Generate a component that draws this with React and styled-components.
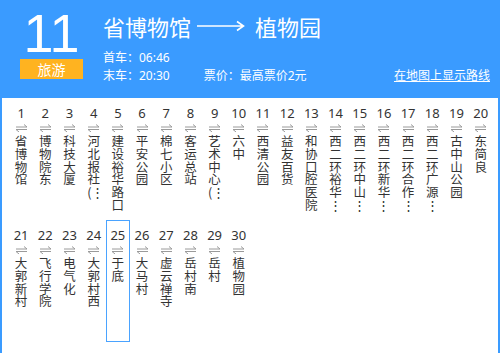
import styled, { createGlobalStyle } from 'styled-components';

const GlobalStyle = createGlobalStyle`
  html, body {
    margin: 0;
    padding: 0;
    background: #fff;
  }
  body {
    font-family: 'Noto Sans', 'Noto Sans CJK SC', sans-serif;
  }
`;

const BLUE = '#3a9bff';

const stops = [
  '省博物馆', '博物院东', '科技大厦', '河北报社(⋮', '建设裕华路口', '平安公园',
  '棉七小区', '客运总站', '艺术中心(⋮', '六中', '西清公园', '益友百货',
  '和协口腔医院', '西二环裕华⋮', '西二环中山⋮', '西二环新华⋮', '西二环合作⋮',
  '西二环广源⋮', '古中山公园', '东简良', '大郭新村', '飞行学院', '电气化',
  '大郭村西', '于底', '大马村', '虚云禅寺', '岳村南', '岳村', '植物园',
];

const Panel = styled.div`
  width: 500px;
  height: 353px;
  overflow: hidden;
  display: flex;
  flex-direction: column;
`;

const Header = styled.div`
  height: 98px;
  flex-shrink: 0;
  background: ${BLUE};
  color: #fff;
  display: flex;
  padding: 0 10px 0 20px;
  box-sizing: border-box;
`;

const Badge = styled.div`
  width: 63px;
  display: flex;
  flex-direction: column;
  align-items: center;
`;

const LineNo = styled.div`
  font-family: 'Liberation Sans', 'Noto Sans', sans-serif;
  font-size: 54px;
  line-height: 46px;
  height: 46px;
  margin: 10px 0 3px;
`;

const Tag = styled.div`
  width: 63px;
  height: 20px;
  background: #ffb320;
  font-size: 14px;
  line-height: 20px;
  text-align: center;
  font-family: 'Noto Sans CJK SC', sans-serif;
`;

const Info = styled.div`
  flex: 1;
  margin-left: 20px;
  display: flex;
  flex-direction: column;
`;

const Title = styled.div`
  display: flex;
  align-items: center;
  height: 48px;
  padding-top: 4px;
  box-sizing: border-box;
  font-family: 'Noto Sans CJK SC', sans-serif;
  font-size: 22px;
  gap: 6px;
`;

const Row = styled.div`
  display: flex;
  align-items: center;
  height: 18px;
  font-size: 12px;
  font-family: 'Noto Sans', 'Noto Sans CJK SC', sans-serif;
`;

const Price = styled.span`
  margin-left: 34px;
`;

const MapLink = styled.a`
  margin-left: auto;
  color: #fff;
  text-decoration: underline;
  cursor: pointer;
`;

const Body = styled.div`
  flex: 1;
  border-left: 2px solid ${BLUE};
  border-right: 2px solid ${BLUE};
  padding-left: 7px;
  display: flex;
  flex-wrap: wrap;
  align-content: flex-start;
`;

const Stop = styled.div`
  width: 24.2px;
  height: 122px;
  box-sizing: border-box;
  border: 1px solid ${p => (p.$active ? '#4aa3ff' : 'transparent')};
  display: flex;
  flex-direction: column;
  align-items: center;
  color: #333;
`;

const Num = styled.div`
  font-size: 13px;
  line-height: 14px;
  margin-top: 7px;
  font-family: 'Noto Sans', sans-serif;
  white-space: nowrap;
`;

const Arrows = styled.svg`
  display: block;
  margin-top: 4px;
`;

const Name = styled.div`
  width: 13px;
  margin-top: 3px;
  font-size: 12.5px;
  line-height: 12.8px;
  font-family: 'Noto Sans CJK SC', sans-serif;
  word-break: break-all;
  text-align: center;
`;

function BothWays() {
  return (
    <Arrows width="13" height="8" viewBox="0 0 13 8">
      <path d="M1 3H12L9 0.5" fill="none" stroke="#9a9a9a" strokeWidth="1" />
      <path d="M12 5.5H1L4 8" fill="none" stroke="#9a9a9a" strokeWidth="1" />
    </Arrows>
  );
}

export default function App() {
  return (
    <>
      <GlobalStyle />
      <Panel>
        <Header>
          <Badge>
            <LineNo>11</LineNo>
            <Tag>旅游</Tag>
          </Badge>
          <Info>
            <Title>
              <span>省博物馆</span>
              <svg width="48" height="12" viewBox="0 0 48 12">
                <path d="M0 6H46M40 1.5L46.5 6L40 10.5" fill="none" stroke="#fff" strokeWidth="1.6" />
              </svg>
              <span style={{ marginLeft: 4 }}>植物园</span>
            </Title>
            <Row>首车：06:46</Row>
            <Row>
              <span>末车：20:30</span>
              <Price>票价：最高票价2元</Price>
              <MapLink>在地图上显示路线</MapLink>
            </Row>
          </Info>
        </Header>
        <Body>
          {stops.map((s, i) => (
            <Stop key={i} $active={i === 24}>
              <Num>{i + 1}</Num>
              <BothWays />
              <Name>{s}</Name>
            </Stop>
          ))}
        </Body>
      </Panel>
    </>
  );
}
